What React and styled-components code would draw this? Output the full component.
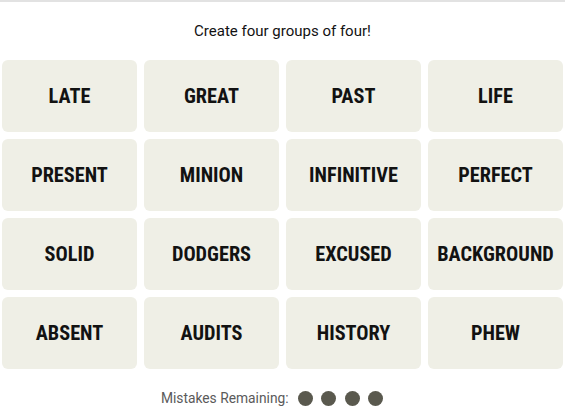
import styled, { createGlobalStyle } from "styled-components";

const GlobalStyle = createGlobalStyle`
  html, body {
    margin: 0;
    padding: 0;
    background: #ffffff;
  }
  body {
    font-family: "Roboto", "Liberation Sans", sans-serif;
    color: #121212;
  }
`;

const Page = styled.div`
  width: 565px;
  border-top: 2px solid #e2e2e2;
  display: flex;
  flex-direction: column;
  align-items: center;
`;

const Prompt = styled.p`
  margin: 0;
  height: 58px;
  display: flex;
  align-items: center;
  font-family: "Roboto", "Liberation Sans", sans-serif;
  font-size: 15px;
  color: #121212;
`;

const Board = styled.div`
  width: 561px;
  display: grid;
  grid-template-columns: repeat(4, 1fr);
  grid-auto-rows: 72px;
  column-gap: 7px;
  row-gap: 7px;
`;

const Tile = styled.button`
  border: none;
  border-radius: 6px;
  background: #efefe6;
  color: #121212;
  font-family: "Roboto Condensed", "Liberation Sans", sans-serif;
  font-weight: 700;
  font-size: 20.3px;
  text-transform: uppercase;
  display: flex;
  align-items: center;
  justify-content: center;
  padding: 0;
  cursor: pointer;
`;

const Mistakes = styled.div`
  height: 58px;
  display: flex;
  align-items: center;
  gap: 9px;
  padding-right: 21px;
  font-family: "Roboto", "Liberation Sans", sans-serif;
  font-size: 13.8px;
  color: #5a5a5a;
`;

const Dots = styled.div`
  display: flex;
  gap: 8.5px;
`;

const Dot = styled.span`
  width: 15px;
  height: 15px;
  border-radius: 50%;
  background: #5a594e;
`;

const words = [
  "LATE", "GREAT", "PAST", "LIFE",
  "PRESENT", "MINION", "INFINITIVE", "PERFECT",
  "SOLID", "DODGERS", "EXCUSED", "BACKGROUND",
  "ABSENT", "AUDITS", "HISTORY", "PHEW",
];

export default function App() {
  return (
    <>
      <GlobalStyle />
      <Page>
        <Prompt>Create four groups of four!</Prompt>
        <Board>
          {words.map((w) => (
            <Tile key={w}>{w}</Tile>
          ))}
        </Board>
        <Mistakes>
          <span>Mistakes Remaining:</span>
          <Dots>
            {[0, 1, 2, 3].map((i) => (
              <Dot key={i} />
            ))}
          </Dots>
        </Mistakes>
      </Page>
    </>
  );
}
